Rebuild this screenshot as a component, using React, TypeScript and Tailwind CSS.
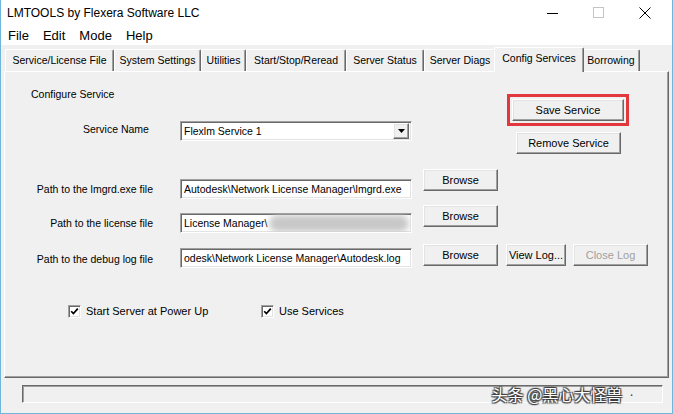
import React from "react";

const raised =
  "bg-[#f0f0f0] border border-t-white border-l-white border-r-[#696969] border-b-[#696969] shadow-[inset_-1px_-1px_0_#a0a0a0,inset_1px_1px_0_#e3e3e3]";
const sunken =
  "bg-white border border-t-[#a0a0a0] border-l-[#a0a0a0] border-r-white border-b-white shadow-[inset_1px_1px_0_#696969,inset_-1px_-1px_0_#e3e3e3]";

function Btn({ label, w, disabled }: { label: string; w: string; disabled?: boolean }) {
  return (
    <div
      className={`${raised} ${w} h-[22px] flex items-center justify-center text-[11px] leading-none ${
        disabled ? "text-[#a0a0a0]" : "text-black"
      }`}
    >
      {label}
    </div>
  );
}

function Field({ text, blur }: { text: string; blur?: boolean }) {
  return (
    <div className={`${sunken} relative w-[232px] h-[20px] overflow-hidden flex items-center pl-[3px]`}>
      <span className="whitespace-nowrap text-[10.5px] leading-none text-black">{text}</span>
      {blur && (
        <div className="absolute left-[88px] top-[1px] w-[140px] h-[17px] rounded-full bg-[#c8c8c8] blur-[3px]" />
      )}
    </div>
  );
}

function Check({ label }: { label: string }) {
  return (
    <div className="flex items-center">
      <div className={`${sunken} w-[13px] h-[13px] flex items-center justify-center`}>
        <svg width="9" height="9" viewBox="0 0 9 9">
          <path d="M1.2 4.2 L3.4 6.6 L7.8 1.6" stroke="#000" strokeWidth="1.7" fill="none" />
        </svg>
      </div>
      <span className="ml-[5px] text-[11px] leading-none text-black">{label}</span>
    </div>
  );
}

const tabs: { label: string; w: string; sel?: boolean }[] = [
  { label: "Service/License File", w: "w-[109px]" },
  { label: "System Settings", w: "w-[87px]" },
  { label: "Utilities", w: "w-[45px]" },
  { label: "Start/Stop/Reread", w: "w-[100px]" },
  { label: "Server Status", w: "w-[78px]" },
  { label: "Server Diags", w: "w-[72px]" },
  { label: "Config Services", w: "w-[90px]", sel: true },
  { label: "Borrowing", w: "w-[58px]" },
];

export default function App() {
  return (
    <div className="w-[673px] h-[414px] bg-[#f0f0f0] border-x border-b border-[#6fb6dd] flex flex-col font-['Liberation_Sans',Arial,sans-serif] text-black relative overflow-hidden">
      {/* Title bar */}
      <div className="h-[25px] bg-white flex items-center">
        <span className="ml-[6px] text-[12px] leading-none">LMTOOLS by Flexera Software LLC</span>
        <div className="ml-auto flex items-center">
          <svg width="46" height="25" viewBox="0 0 46 25">
            <line x1="17" y1="13.5" x2="28" y2="13.5" stroke="#000" strokeWidth="1" />
          </svg>
          <svg width="46" height="25" viewBox="0 0 46 25">
            <rect x="17.5" y="7.5" width="10" height="10" stroke="#c4c4c4" strokeWidth="1" fill="none" />
          </svg>
          <svg width="46" height="25" viewBox="0 0 46 25" className="mr-[4px]">
            <path d="M17.5 7.5 L28.5 18.5 M28.5 7.5 L17.5 18.5" stroke="#000" strokeWidth="1" />
          </svg>
        </div>
      </div>
      {/* Menu bar */}
      <div className="h-[20px] bg-white flex items-center text-[13px] leading-none">
        <span className="ml-[7px]">File</span>
        <span className="ml-[14px]">Edit</span>
        <span className="ml-[14px]">Mode</span>
        <span className="ml-[14px]">Help</span>
      </div>
      {/* Tabs */}
      <div className="h-[25px] flex items-end pl-[4px] mt-[1px]">
        {tabs.map((t) =>
          t.sel ? (
            <div
              key={t.label}
              className={`${t.w} -mx-[2px] h-[25px] -mb-px relative z-10 bg-[#f0f0f0] border-t border-l border-t-white border-l-white border-r border-r-[#696969] shadow-[inset_-1px_0_0_#a0a0a0] rounded-t-[2px] flex items-start justify-center pt-[5px] text-[10.5px] leading-none`}
            >
              {t.label}
            </div>
          ) : (
            <div
              key={t.label}
              className={`${t.w} h-[22px] bg-[#f0f0f0] border-t border-l border-t-white border-l-white border-r border-r-[#696969] shadow-[inset_-1px_0_0_#a0a0a0] rounded-t-[2px] flex items-center justify-center text-[10.5px] leading-none`}
            >
              {t.label}
            </div>
          )
        )}
      </div>
      {/* Panel */}
      <div className="ml-[3px] w-[665px] h-[307px] border border-t-white border-l-white border-r-[#696969] border-b-[#696969] shadow-[inset_-1px_-1px_0_#a0a0a0] flex flex-col text-[10.5px] leading-[14px]">
        {/* Section A */}
        <div className="flex h-[89px]">
          <div className="w-[420px] flex flex-col">
            <div className="ml-[26px] mt-[15px] h-[14px]">Configure Service</div>
            <div className="flex items-start mt-[20px]">
              <div className="ml-[78px] w-[97px] mt-[1px]">Service Name</div>
              <div className={`${sunken} w-[232px] h-[20px] flex items-center pl-[3px] pr-[2px]`}>
                <span className="whitespace-nowrap leading-none">Flexlm Service 1</span>
                <div className={`${raised} ml-auto w-[16px] h-[16px] flex items-center justify-center`}>
                  <svg width="7" height="4" viewBox="0 0 7 4">
                    <path d="M0 0 L7 0 L3.5 4 Z" fill="#000" />
                  </svg>
                </div>
              </div>
            </div>
          </div>
          <div className="flex flex-col">
            <div className="ml-[82px] mt-[22px] w-[122px] h-[32px] border-[3px] border-[#e2373d] p-[2px]">
              <Btn label="Save Service" w="w-[112px]" />
            </div>
            <div className="ml-[91px] mt-[6px]">
              <Btn label="Remove Service" w="w-[105px]" />
            </div>
          </div>
        </div>
        {/* Row 1 */}
        <div className="flex items-start mt-[8px]">
          <div className="w-[148px] text-right mt-[13px]">Path to the lmgrd.exe file</div>
          <div className="ml-[27px] mt-[10px]">
            <Field text="Autodesk\Network License Manager\lmgrd.exe" />
          </div>
          <div className="ml-[11px]">
            <Btn label="Browse" w="w-[75px]" />
          </div>
        </div>
        {/* Row 2 */}
        <div className="flex items-start mt-[6px]">
          <div className="w-[148px] text-right mt-[11px]">Path to the license file</div>
          <div className="ml-[27px] mt-[8px]">
            <Field text="License Manager\" blur />
          </div>
          <div className="ml-[11px]">
            <Btn label="Browse" w="w-[75px]" />
          </div>
        </div>
        {/* Row 3 */}
        <div className="flex items-start mt-[11px]">
          <div className="w-[148px] text-right mt-[8px]">Path to the debug log file</div>
          <div className="ml-[27px] mt-[4px]">
            <Field text="odesk\Network License Manager\Autodesk.log" />
          </div>
          <div className="ml-[11px]">
            <Btn label="Browse" w="w-[75px]" />
          </div>
          <div className="ml-[8px]">
            <Btn label="View Log..." w="w-[60px]" />
          </div>
          <div className="ml-[7px]">
            <Btn label="Close Log" w="w-[75px]" disabled />
          </div>
        </div>
        {/* Checkboxes */}
        <div className="flex items-center mt-[37px] ml-[63px]">
          <div className="w-[193px]">
            <Check label="Start Server at Power Up" />
          </div>
          <Check label="Use Services" />
        </div>
      </div>
      {/* Status bar */}
      <div className="relative flex-1">
        <div className="ml-[21px] mt-[7px] w-[641px] h-[18px] border border-t-[#696969] border-l-[#696969] border-r-white border-b-white shadow-[inset_1px_1px_0_#a0a0a0]" />
        <div className="absolute right-[38px] top-[6px] flex items-center whitespace-nowrap">
          <span className="text-[16px] leading-[20px] text-white font-['Noto_Sans_CJK_SC',sans-serif] [text-shadow:1px_1px_1px_#3a3a3a,-1px_-1px_1px_#3a3a3a,1px_-1px_1px_#3a3a3a,-1px_1px_1px_#3a3a3a]">
            头条 @黑心大怪兽
          </span>
          <span className="ml-[7px] text-[14px] leading-none text-[#444]">·</span>
        </div>
      </div>
    </div>
  );
}
